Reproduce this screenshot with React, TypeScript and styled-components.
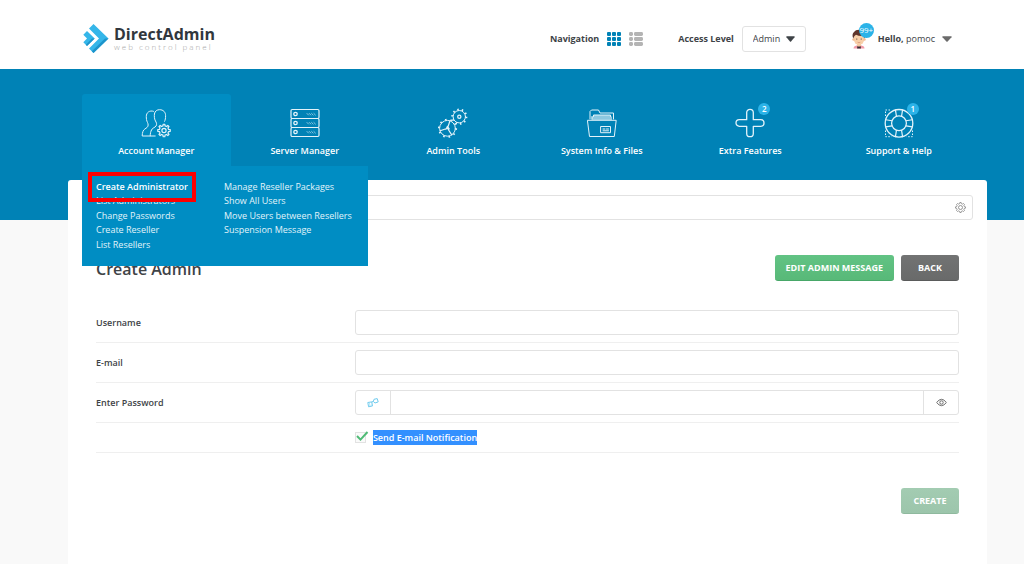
import React from "react";
import styled, { createGlobalStyle, css } from "styled-components";

const color = {
  banner: "#0082b6",
  active: "#008dc3",
  sky: "#2bb3e8",
  text: "#3e4347",
  border: "#e2e2e2",
  rule: "#efefef",
  page: "#f9f9f9",
};

const GlobalStyle = createGlobalStyle`
  *, *::before, *::after { box-sizing: border-box; }
  body {
    margin: 0;
    background: ${color.page};
    color: ${color.text};
    font-family: "Open Sans", "Noto Sans", sans-serif;
    font-size: 9px;
    line-height: 14px;
  }
  button, input, select { font: inherit; color: inherit; }
`;

const Page = styled.div`
  display: flex;
  flex-direction: column;
  min-height: 100vh;
`;

const Header = styled.header`
  display: flex;
  align-items: center;
  height: 69px;
  padding: 8px 72px 0 82px;
  background: #fff;
`;

const Brand = styled.a`
  display: flex;
  align-items: center;
  gap: 5px;
  margin-right: auto;
  color: #31373d;
  text-decoration: none;
`;

const BrandText = styled.span`
  display: flex;
  flex-direction: column;
`;

const BrandName = styled.span`
  font-size: 16px;
  font-weight: 700;
  line-height: 15px;
`;

const BrandTagline = styled.span`
  color: #a8a8a8;
  font-size: 8px;
  font-weight: 300;
  line-height: 9px;
  letter-spacing: 2px;
`;

const HeaderGroup = styled.div<{ $before?: number }>`
  display: flex;
  align-items: center;
  gap: 8px;
  margin-left: ${(p) => p.$before ?? 0}px;
`;

const HeaderLabel = styled.label`
  font-weight: 700;
`;

const IconButton = styled.button`
  display: flex;
  padding: 0;
  border: 0;
  background: none;
  cursor: pointer;
`;

const SelectBox = styled.span`
  display: grid;
  align-items: center;
  width: 64px;

  & > * { grid-area: 1 / 1; }
  & > svg { justify-self: end; margin-right: 11px; pointer-events: none; }
`;

const LevelSelect = styled.select`
  width: 100%;
  height: 26px;
  padding: 0 10px;
  border: 1px solid ${color.border};
  border-radius: 3px;
  background: #fff;
  appearance: none;
`;

const UserButton = styled(IconButton)`
  align-items: center;
  gap: 7px;
`;

const AvatarWrap = styled.span`
  position: relative;
  display: flex;
  margin-right: 4px;
`;

const CountBadge = styled.span<{ $large?: boolean }>`
  position: absolute;
  display: flex;
  align-items: center;
  justify-content: center;
  border-radius: 50%;
  background: ${color.sky};
  color: #fff;
  ${(p) =>
    p.$large
      ? css`top: -6px; right: -7px; width: 15px; height: 15px; font-size: 8px;`
      : css`top: -5px; right: -5px; width: 12px; height: 12px; font-size: 8px;`}
`;

const Banner = styled.nav`
  height: 151px;
  padding: 25px 51px 0 82px;
  background: ${color.banner};
`;

const Tabs = styled.ul`
  display: grid;
  grid-template-columns: repeat(6, 1fr);
  margin: 0;
  padding: 0;
  list-style: none;
`;

const Tab = styled.li<{ $active?: boolean }>`
  position: relative;
  height: 72px;
  border-radius: 3px 3px 0 0;
  background: ${(p) => (p.$active ? color.active : "transparent")};
`;

const TabLink = styled.a`
  display: flex;
  flex-direction: column;
  align-items: center;
  gap: 6px;
  padding-top: 14px;
  color: #fff;
  font-weight: 600;
  text-decoration: none;
`;

const TabIcon = styled.span`
  position: relative;
  display: flex;
`;

const Dropdown = styled.ul`
  position: absolute;
  z-index: 2;
  top: 100%;
  left: 0;
  display: grid;
  grid-auto-flow: column;
  grid-template-rows: repeat(5, 1fr);
  grid-template-columns: 128px 130px;
  width: 286px;
  height: 100px;
  margin: 0;
  padding: 14px;
  background: ${color.active};
  list-style: none;
`;

const MenuLink = styled.a<{ $strong?: boolean }>`
  display: block;
  color: ${(p) => (p.$strong ? "#fff" : "#e2f3fa")};
  font-weight: ${(p) => (p.$strong ? 600 : 400)};
  text-decoration: none;
  white-space: nowrap;
`;

const Highlight = styled.span`
  position: absolute;
  top: 6px;
  left: 6px;
  width: 108px;
  height: 30px;
  border: 4px solid #fe0000;
  pointer-events: none;
`;

const Panel = styled.main`
  flex: 1;
  margin: -40px 37px 0 68px;
  padding: 15px 14px 24px;
  border-radius: 3px 3px 0 0;
  background: #fff;
`;

const SearchBar = styled.form`
  display: flex;
  align-items: center;
  height: 25px;
  padding-right: 6px;
  border: 1px solid ${color.border};
  border-radius: 3px;
`;

const SearchInput = styled.input`
  flex: 1;
  min-width: 0;
  padding: 0 12px;
  border: 0;
  outline: 0;
  background: none;
`;

const Content = styled.section`
  padding: 35px 14px 0;
`;

const TitleRow = styled.div`
  display: flex;
  align-items: flex-end;
  gap: 7px;
  margin-bottom: 22px;
`;

const Title = styled.h1`
  margin: 0 auto 0 0;
  font-size: 16px;
  font-weight: 600;
  line-height: 24px;
`;

const tones = {
  green: ["#62c384", "#58b978", "#47a768"],
  grey: ["#727373", "#696a6a", "#5a5b5b"],
  muted: ["#a3ccb2", "#9cc5ab", "#8fb99e"],
};

const Button = styled.button<{ $tone: keyof typeof tones }>`
  height: 26px;
  min-width: 58px;
  padding: 0 11px;
  border: 0;
  border-bottom: 1px solid ${(p) => tones[p.$tone][2]};
  border-radius: 3px;
  background: linear-gradient(${(p) => tones[p.$tone][0]}, ${(p) => tones[p.$tone][1]});
  color: #fff;
  font-weight: 700;
  text-transform: uppercase;
`;

const Row = styled.div`
  display: grid;
  grid-template-columns: 3fr 7fr;
  align-items: center;
  padding: 7px 0;
  border-bottom: 1px solid ${color.rule};
`;

const RowLabel = styled.label`
  font-weight: 600;
`;

const fieldFrame = css`
  height: 25px;
  border: 1px solid ${color.border};
  border-radius: 3px;
  background: #fff;
`;

const TextInput = styled.input`
  ${fieldFrame}
  width: 100%;
  padding: 0 10px;
`;

const PasswordField = styled.div`
  ${fieldFrame}
  display: grid;
  grid-template-columns: 34px 1fr 34px;
`;

const PasswordInput = styled.input`
  min-width: 0;
  padding: 0 10px;
  border: solid ${color.border};
  border-width: 0 1px;
  background: none;
`;

const FieldButton = styled(IconButton)`
  align-items: center;
  justify-content: center;
`;

const CheckLabel = styled.label`
  grid-column: 2;
  display: flex;
  align-items: center;
  gap: 7px;
  font-weight: 600;
  line-height: 15px;
`;

const CheckBox = styled.span`
  position: relative;
  display: flex;

  & > svg { position: absolute; top: -1px; left: 0; pointer-events: none; }
`;

const CheckInput = styled.input`
  width: 11px;
  height: 11px;
  margin: 0;
  border: 1px solid ${color.border};
  background: #fafafa;
  appearance: none;
`;

const Selected = styled.span`
  background: #3390ff;
  color: #fff;
`;

const Actions = styled.div`
  display: flex;
  justify-content: flex-end;
  margin-top: 35px;
`;

function polar(cx: number, cy: number, r: number, deg: number) {
  const a = (deg * Math.PI) / 180;
  return `${(cx + r * Math.cos(a)).toFixed(2)} ${(cy + r * Math.sin(a)).toFixed(2)}`;
}

function gear(cx: number, cy: number, outer: number, inner: number, teeth: number) {
  const step = 360 / teeth;
  const points: string[] = [];
  for (let i = 0; i < teeth; i++) {
    const a = i * step - 90;
    points.push(
      polar(cx, cy, inner, a - step * 0.28),
      polar(cx, cy, outer, a - step * 0.17),
      polar(cx, cy, outer, a + step * 0.17),
      polar(cx, cy, inner, a + step * 0.28),
    );
  }
  return `M${points.join("L")}Z`;
}

const Line = ({ children }: { children: React.ReactNode }) => (
  <svg width="30" height="30" viewBox="0 0 30 30" fill="none" stroke="#e3f3fa" strokeWidth="1" strokeLinejoin="round" strokeLinecap="round" aria-hidden="true">
    {children}
  </svg>
);

const UsersIcon = () => (
  <Line>
    <path d="M13.5 5.500C14 3 16 1.700 18.600 1.700c3.600 0 6 2.300 6 6 0 2.600-.3 4.200-1 5.600M13.500 5.500c-.5 2.500-.2 6 1.500 8.500 1 1.500.8 4-1 5-1.500 1-3 1.500-3.500 3" />
    <path d="M12.500 3.300C8.500 2 5.300 4.500 5.300 8.500c0 2 .2 4.200 1.200 6 .8 1.600 1 3.500-.3 4.800-1.500 1.500-3.400 1.800-4.200 4-.6 1.500-.8 3-.8 4.700h13" />
    <path d="M10.500 22c-.8 1.500-1.300 3.500-1.300 5.800" />
    <path d={gear(23, 22.500, 6.300, 4.700, 8)} strokeWidth="1.200" />
    <circle cx="23" cy="22.500" r="2.100" strokeWidth="1.200" />
  </Line>
);

const ServerIcon = () => (
  <Line>
    {[1.500, 10.500, 19.500].map((y) => (
      <g key={y}>
        <rect x="1" y={y} width="28" height="9" rx="1.200" strokeWidth="1.200" />
        <circle cx="5.500" cy={y + 4.500} r="1.700" strokeWidth="1.300" />
        <path d={`M17 ${y + 4}l1.500 1.500m.8-1.500l1.500 1.500m.8-1.500l1.500 1.500m.8-1.500l1.500 1.500`} strokeWidth=".9" opacity=".7" />
      </g>
    ))}
  </Line>
);

const CogsIcon = () => (
  <Line>
    <circle cx="9.500" cy="20.300" r="7.900" />
    <circle cx="9.500" cy="20.300" r="8.700" strokeWidth="1.800" strokeDasharray="1.600 3.860" strokeLinecap="butt" />
    <path d="M9.500 20.300L12 12.800M9.500 20.300l-7.300 2.500M9.500 20.300l4.200 6.600M8 21.200l1.500-2.900 1.700 2.600" strokeWidth="1.200" />
    <circle cx="21.300" cy="8.700" r="6.200" />
    <circle cx="21.300" cy="8.700" r="7.100" strokeWidth="2" strokeDasharray="1.500 2.960" strokeLinecap="butt" />
    <circle cx="21.300" cy="8.700" r="1.600" strokeWidth="1.300" />
  </Line>
);

const FolderIcon = () => (
  <Line>
    <path d="M3 11V3.500L4.500 2h7L13 5h13.500v6" />
    <path d="M4.500 12V8.500h2V7h17v1.500h1.500V12z" fill="#8cc8e0" stroke="none" />
    <path d="M5 11V8.500M6.500 8.500V7h17v1.500" />
    <path d="M.8 12.300h28.400L27.300 28.500H2.900z" />
    <rect x="14" y="18.500" width="9.500" height="6.200" />
    <path d="M16 21h2m1.500 0h2M16 22.800h5.500" />
  </Line>
);

const PlusIcon = () => (
  <Line>
    <path strokeWidth="1.300" d="M11.700 11.700V4.600a3.300 3.300 0 0 1 6.600 0v7.100h7.400a3.300 3.300 0 0 1 0 6.600h-7.400v7.100a3.300 3.300 0 0 1-6.600 0v-7.100H4.300a3.300 3.300 0 0 1 0-6.600z" />
  </Line>
);

const LifebuoyIcon = () => (
  <Line>
    <circle cx="15" cy="15.300" r="13.800" strokeWidth="1.300" />
    <circle cx="15" cy="15.300" r="7.400" strokeWidth="1.300" />
    {[0, 90, 180, 270].flatMap((a) => [
      <path key={`${a}a`} d={`M${polar(15, 15.3, 7.4, a - 20)}L${polar(15, 15.3, 13.8, a - 15)}`} strokeWidth="1.200" />,
      <path key={`${a}b`} d={`M${polar(15, 15.3, 7.4, a + 20)}L${polar(15, 15.3, 13.8, a + 15)}`} strokeWidth="1.200" />,
    ])}
    <path d="M1.500 8V2h6M1.500 22.500V28.700h6M28.500 22.500V28.700h-6" strokeDasharray="1.500 1.500" strokeLinecap="butt" />
  </Line>
);

const LogoMark = () => (
  <svg width="27" height="31" viewBox="0 0 27 31" aria-hidden="true">
    <path d="M11.500 1L26.500 15.500 11.500 30 7 25.500 17 15.500 7 5.500z" fill="#35b6e9" />
    <path d="M26.500 15.500L11.500 30 9.800 28.300 23 15.500z" fill="#1d94cb" />
    <path d="M5 8L12.700 15.500 5 23 1.300 19.300 5 15.500 1.300 11.700z" fill="#35b6e9" />
    <path d="M12.700 15.500L5 23 3.800 21.800 10 15.500z" fill="#1d94cb" />
  </svg>
);

const Caret = ({ fill = "#3e4347", width = 9 }) => (
  <svg width={width} height="6" viewBox="0 0 10 6" preserveAspectRatio="none" aria-hidden="true">
    <path d="M.8.300h8.400q.8.200.3.900L5.600 5.500q-.6.500-1.200 0L.5 1.200Q0 .5.800.300z" fill={fill} />
  </svg>
);

const GridIcon = () => (
  <svg width="14" height="14" viewBox="0 0 14 14" fill="#0082b6" aria-hidden="true">
    {[0, 5, 10].flatMap((y) => [0, 5, 10].map((x) => <rect key={`${x}-${y}`} x={x} y={y} width="4" height="4" rx="1" />))}
  </svg>
);

const ListIcon = () => (
  <svg width="14" height="14" viewBox="0 0 14 14" fill="#b4b4b4" aria-hidden="true">
    {[0, 5, 10].map((y) => (
      <g key={y}>
        <rect x="0" y={y} width="4" height="4" rx="1.400" />
        <rect x="5" y={y} width="9" height="4" rx="1.400" />
      </g>
    ))}
  </svg>
);

const Avatar = () => (
  <svg width="16" height="20" viewBox="0 0 16 20" aria-hidden="true">
    <path d="M2.500 19.500q0-2.500 3-3h5q3 .5 3 3z" fill="#f09aa8" />
    <path d="M6 14.500h4v2.500L8 19l-2-2z" fill="#f3c6a0" />
    <path d="M6.500 17l1.500.8 1.500-.8.500 2.500H6z" fill="#3b2b33" />
    <ellipse cx="8" cy="10" rx="5.300" ry="6" fill="#f8cfa8" />
    <circle cx="2.500" cy="10.500" r="1.200" fill="#f3bd92" />
    <circle cx="13.500" cy="10.500" r="1.200" fill="#f3bd92" />
    <path d="M2.200 9.500Q.5 5 3 3q2-3 7-2 4.500 0 4.500 5l-.8 3.500L12.500 7Q8 7.500 5 5.800L3.500 7z" fill="#60352b" />
    <circle cx="5.800" cy="10" r=".6" fill="#49352e" />
    <circle cx="10.200" cy="10" r=".6" fill="#49352e" />
    <path d="M6.600 13.300q1.400.8 2.800 0" stroke="#d79072" strokeWidth=".7" fill="none" />
  </svg>
);

const SettingsIcon = () => (
  <svg width="11" height="11" viewBox="0 0 11 11" fill="none" stroke="#8b8b8b" strokeWidth=".9" strokeLinejoin="round" aria-hidden="true">
    <path d={gear(5.5, 5.5, 5, 4, 8)} />
    <circle cx="5.500" cy="5.500" r="2" />
  </svg>
);

const DiceIcon = () => (
  <svg width="12" height="10" viewBox="0 0 12 10" fill="none" stroke="#6fcbee" strokeWidth="1" strokeLinejoin="round" aria-hidden="true">
    <path d="M.8 4.500l3.900-.6.800 4-3.900.9z" />
    <path d="M7 1.300l3.200-.7 1 3.300-3.200 1.100-1.700-1.500z" />
    <path d="M2.200 5.900h.8m.8 1.200h.6M2.500 7.300h.6M4.700 3.900l1.600-.4" />
  </svg>
);

const EyeIcon = () => (
  <svg width="11" height="9" viewBox="0 0 11 9" fill="none" stroke="#6d6d6d" strokeWidth="1" aria-hidden="true">
    <path d="M.6 4.500Q5.500-1.900 10.400 4.500 5.500 10.900.6 4.500z" />
    <circle cx="5.500" cy="4.500" r="1.700" />
  </svg>
);

const CheckIcon = () => (
  <svg width="14" height="11" viewBox="0 0 14 11" fill="none" stroke="#4fbb76" strokeWidth="2" aria-hidden="true">
    <path d="M2 5l3.500 3.600L12.500 1" />
  </svg>
);

const tabs = [
  { label: "Account Manager", Icon: UsersIcon },
  { label: "Server Manager", Icon: ServerIcon },
  { label: "Admin Tools", Icon: CogsIcon },
  { label: "System Info & Files", Icon: FolderIcon },
  { label: "Extra Features", Icon: PlusIcon, count: 2 },
  { label: "Support & Help", Icon: LifebuoyIcon, count: 1 },
];

const accountLinks = [
  "Create Administrator",
  "List Administrators",
  "Change Passwords",
  "Create Reseller",
  "List Resellers",
  "Manage Reseller Packages",
  "Show All Users",
  "Move Users between Resellers",
  "Suspension Message",
];

export default function App() {
  return (
    <Page>
      <GlobalStyle />
      <Header>
        <Brand href="#">
          <LogoMark />
          <BrandText>
            <BrandName>DirectAdmin</BrandName>
            <BrandTagline>web control panel</BrandTagline>
          </BrandText>
        </Brand>
        <HeaderGroup>
          <HeaderLabel as="span">Navigation</HeaderLabel>
          <IconButton aria-label="Grid navigation"><GridIcon /></IconButton>
          <IconButton aria-label="List navigation"><ListIcon /></IconButton>
        </HeaderGroup>
        <HeaderGroup $before={35}>
          <HeaderLabel htmlFor="level">Access Level</HeaderLabel>
          <SelectBox>
            <LevelSelect id="level" defaultValue="Admin">
              <option>Admin</option>
            </LevelSelect>
            <Caret />
          </SelectBox>
        </HeaderGroup>
        <HeaderGroup $before={45}>
          <UserButton>
            <AvatarWrap>
              <Avatar />
              <CountBadge $large>99+</CountBadge>
            </AvatarWrap>
            <span><b>Hello,</b> pomoc</span>
            <Caret fill="#6b6b6b" width={10} />
          </UserButton>
        </HeaderGroup>
      </Header>

      <Banner>
        <Tabs>
          {tabs.map(({ label, Icon, count }, i) => (
            <Tab key={label} $active={i === 0}>
              <TabLink href="#">
                <TabIcon>
                  <Icon />
                  {count && <CountBadge>{count}</CountBadge>}
                </TabIcon>
                {label}
              </TabLink>
              {i === 0 && (
                <Dropdown>
                  {accountLinks.map((link, n) => (
                    <li key={link}>
                      <MenuLink href="#" $strong={n === 0}>{link}</MenuLink>
                      {n === 0 && <Highlight />}
                    </li>
                  ))}
                </Dropdown>
              )}
            </Tab>
          ))}
        </Tabs>
      </Banner>

      <Panel>
        <SearchBar>
          <SearchInput type="search" aria-label="Search" />
          <IconButton type="button" aria-label="Settings"><SettingsIcon /></IconButton>
        </SearchBar>
        <Content>
          <TitleRow>
            <Title>Create Admin</Title>
            <Button $tone="green">Edit Admin Message</Button>
            <Button $tone="grey">Back</Button>
          </TitleRow>
          <form>
            <Row>
              <RowLabel htmlFor="username">Username</RowLabel>
              <TextInput id="username" type="text" />
            </Row>
            <Row>
              <RowLabel htmlFor="email">E-mail</RowLabel>
              <TextInput id="email" type="email" />
            </Row>
            <Row>
              <RowLabel htmlFor="password">Enter Password</RowLabel>
              <PasswordField>
                <FieldButton type="button" aria-label="Generate password"><DiceIcon /></FieldButton>
                <PasswordInput id="password" type="password" />
                <FieldButton type="button" aria-label="Show password"><EyeIcon /></FieldButton>
              </PasswordField>
            </Row>
            <Row>
              <CheckLabel>
                <CheckBox>
                  <CheckInput type="checkbox" defaultChecked />
                  <CheckIcon />
                </CheckBox>
                <Selected>Send E-mail Notification</Selected>
              </CheckLabel>
            </Row>
            <Actions>
              <Button $tone="muted" type="submit">Create</Button>
            </Actions>
          </form>
        </Content>
      </Panel>
    </Page>
  );
}
